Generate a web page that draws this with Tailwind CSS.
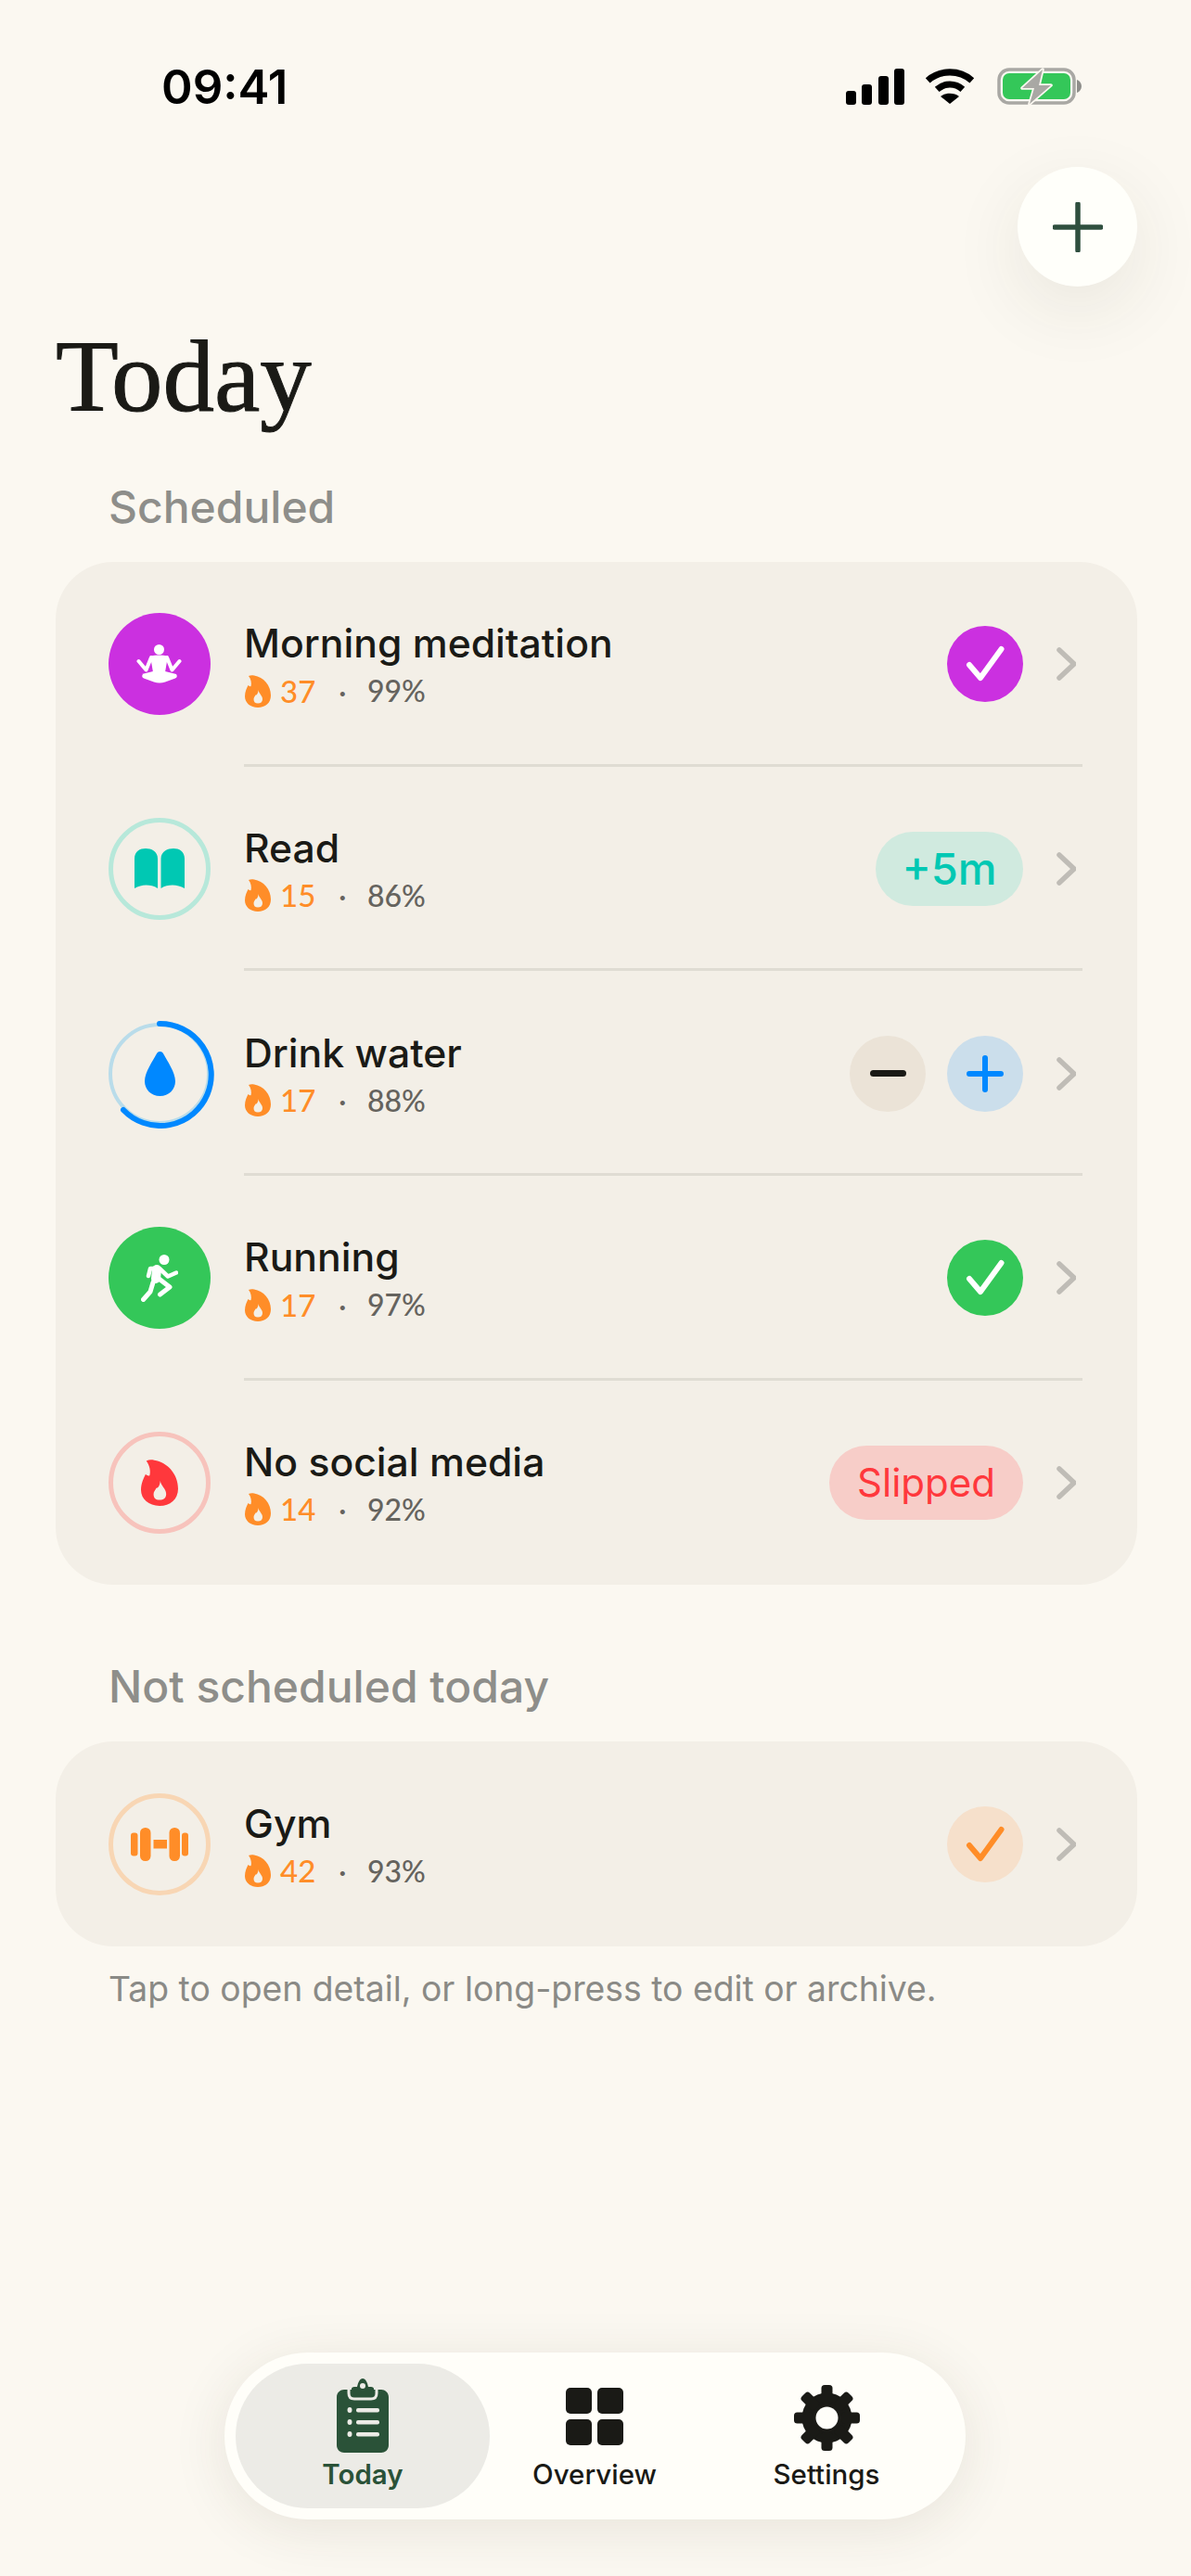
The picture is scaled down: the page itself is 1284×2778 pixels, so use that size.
<!DOCTYPE html>
<html lang="en">
<head>
<meta charset="UTF-8">
<meta name="viewport" content="width=device-width, initial-scale=1.0">
<title>Today</title>
<script src="https://cdn.jsdelivr.net/npm/@tailwindcss/browser@4"></script>
</head>
<body class="bg-[#fbf8f1]">
<div class="relative w-[1284px] h-[2778px] overflow-hidden font-['Inter',sans-serif] text-[#1a1a16]">

  <!-- status bar -->
  <div class="flex items-center justify-between h-[40px] mt-[73px] pl-[174px] pr-[118px]">
    <span class="text-[51px] font-semibold text-black leading-none">09:41</span>
    <div class="flex items-center">
      <svg width="64" height="40" viewBox="0 0 64 40" fill="#000"><rect x="1" y="25" width="11" height="15" rx="3"/><rect x="18" y="18" width="11" height="22" rx="3"/><rect x="36" y="9" width="11" height="31" rx="3"/><rect x="53" y="1" width="11" height="39" rx="3"/></svg>
      <svg class="ml-[20px]" width="58" height="40" viewBox="0 0 58 42" fill="none"><path d="M4 14.5C18 2 40 2 54 14.5" stroke="#000" stroke-width="7.5"/><path d="M14.5 24.5C23 17 35 17 43.5 24.5" stroke="#000" stroke-width="7.5"/><path d="M29 41 18.5 32.5C24 28 34 28 39.5 32.5Z" fill="#000"/></svg>
      <svg class="ml-[22px]" width="91" height="40" viewBox="0 0 91 40" fill="none"><rect x="2" y="2" width="81" height="36" rx="11" stroke="#a9a8a4" stroke-width="3.5"/><rect x="6" y="6" width="73" height="28" rx="7" fill="#34c759"/><path d="M86 13c3 1 5 4 5 7s-2 6-5 7z" fill="#8e8e8a"/><path d="M49 2 27 22h13l-5 17 23-20H45z" fill="#a9a8a4" stroke="#fbf8f1" stroke-width="3.5" paint-order="stroke" stroke-linejoin="round"/></svg>
    </div>
  </div>

  <!-- add button -->
  <button class="absolute left-[1097px] top-[180px] w-[129px] h-[129px] rounded-full bg-[#fffffa] shadow-[0_24px_80px_rgba(60,50,30,0.09)] flex items-center justify-center">
    <svg width="54" height="54" viewBox="0 0 54 54" stroke="#2f4f3e" stroke-width="5.5" stroke-linecap="round"><path d="M27 2v50M2 27h50"/></svg>
  </button>

  <h1 class="mt-[228px] pl-[60px] text-[111px] leading-[130px] font-['Liberation_Serif',serif] text-[#1a1a16] [-webkit-text-stroke:1px_#1a1a16]">Today</h1>
  <h2 class="mt-[46px] pl-[117px] text-[48px] leading-[60px] font-[550] text-[#8e8e8a]">Scheduled</h2>

  <!-- scheduled card -->
  <section class="mt-[29px] mx-[60px] w-[1166px] rounded-[62px] bg-[#f3efe7]">

    <div class="flex items-center h-[220.67px] pl-[57px] pr-[59px]">
      <div class="w-[110px] h-[110px] shrink-0 rounded-full bg-[#cb30e0] flex items-center justify-center">
        <svg width="50" height="42" viewBox="0 0 50 42" fill="#fff"><circle cx="24.5" cy="5.5" r="5.5"/><path fill="none" stroke="#fff" stroke-width="4" stroke-linecap="round" stroke-linejoin="round" d="M2.500 18l8 9.500L16 14M46.500 18l-8 9.500L33 14"/><path d="M15 12.500q9.500-2 19 0L31 30H18z"/><path d="M6 32l12-3h13l12 3q2 3-1 4.500l-11 4q-6 2-12 0l-11-4q-3-1.500-1-4.500z"/></svg>
      </div>
      <div class="flex-1 h-full ml-[36px] pt-[3px] pr-[7px] flex items-center border-b-[3px] border-[#dfdcd3]">
        <div class="flex-1">
          <div class="text-[42.7px] leading-[52px] font-[450]">Morning meditation</div>
          <div class="flex items-center h-[38px] mt-[6px] font-['Lato',sans-serif] text-[33px]">
            <svg class="ml-[1px]" width="28" height="35" viewBox="0 0 28 35"><path fill="#ff8d28" fill-rule="evenodd" d="M4 1C6 0 8 0 10 .5 20 2 28 11 28 22c0 8-6 13-14 13S0 30 0 23c0-5 2-9 3.5-12 1 1 2 1.5 3 1 1-3 0-8-2.500-11zM14.500 16c.5 4 4.500 6 4.500 10 0 3-2 4.500-5 4.500S9.500 29 9.500 26c0-2 1.500-3 2-4.500 1.500.5 3-2.500 3-5.500z"/></svg>
            <span class="ml-[10px] w-[38px] text-[#ff8d28] font-medium">37</span>
            <span class="ml-[25px] w-[14px] text-[#65635e]">·</span>
            <span class="ml-[17px] text-[32px] text-[#65635e] font-medium">99%</span>
          </div>
        </div>
        <div class="w-[82px] h-[82px] rounded-full bg-[#cb30e0] flex items-center justify-center">
          <svg width="44" height="44" viewBox="0 0 44 44" fill="none" stroke="#fff" stroke-width="6" stroke-linecap="round" stroke-linejoin="round"><path d="M5 23l12 14L39.500 6"/></svg>
        </div>
        <svg class="ml-[35px]" width="22" height="36" viewBox="0 0 22 36" fill="none" stroke="#bfbcb6" stroke-width="5.5" stroke-linecap="round" stroke-linejoin="round"><path d="M4 3l16 15L4 33"/></svg>
      </div>
    </div>

    <div class="flex items-center h-[220.67px] pl-[57px] pr-[59px]">
      <div class="w-[110px] h-[110px] shrink-0 rounded-full border-[5px] border-[#b7e8da] flex items-center justify-center">
        <svg width="54" height="43" viewBox="0 0 54 43" fill="#00c8b3"><path d="M0 11C0 3 6 0 12 0s13 3 13 11v32c-4-3-8-3.500-12.500-3.500S4 41 0 43zM54 11c0-8-6-11-12-11S28.500 3 28.500 11v32c4-3 8-3.500 12.500-3.500S50 41 54 43z"/></svg>
      </div>
      <div class="flex-1 h-full ml-[36px] pt-[3px] pr-[7px] flex items-center border-b-[3px] border-[#dfdcd3]">
        <div class="flex-1">
          <div class="text-[42.7px] leading-[52px] font-[450]">Read</div>
          <div class="flex items-center h-[38px] mt-[6px] font-['Lato',sans-serif] text-[33px]">
            <svg class="ml-[1px]" width="28" height="35" viewBox="0 0 28 35"><path fill="#ff8d28" fill-rule="evenodd" d="M4 1C6 0 8 0 10 .5 20 2 28 11 28 22c0 8-6 13-14 13S0 30 0 23c0-5 2-9 3.5-12 1 1 2 1.5 3 1 1-3 0-8-2.500-11zM14.500 16c.5 4 4.500 6 4.500 10 0 3-2 4.500-5 4.500S9.500 29 9.500 26c0-2 1.500-3 2-4.500 1.500.5 3-2.500 3-5.500z"/></svg>
            <span class="ml-[10px] w-[38px] text-[#ff8d28] font-medium">15</span>
            <span class="ml-[25px] w-[14px] text-[#65635e]">·</span>
            <span class="ml-[17px] text-[32px] text-[#65635e] font-medium">86%</span>
          </div>
        </div>
        <div class="w-[159px] h-[80px] rounded-full bg-[#d0eadf] flex items-center justify-center text-[47px] font-medium text-[#00c8b3]">+5m</div>
        <svg class="ml-[35px]" width="22" height="36" viewBox="0 0 22 36" fill="none" stroke="#bfbcb6" stroke-width="5.5" stroke-linecap="round" stroke-linejoin="round"><path d="M4 3l16 15L4 33"/></svg>
      </div>
    </div>

    <div class="flex items-center h-[220.67px] pl-[57px] pr-[59px]">
      <div class="relative w-[110px] h-[110px] shrink-0 flex items-center justify-center">
        <svg class="absolute -left-[1px] -top-[4px]" width="116" height="118" viewBox="0 0 116 118" fill="none"><circle cx="56" cy="59" r="53" stroke="#b9dcea" stroke-width="4"/><path d="M56 5a55 55 0 1 1-39 93" stroke="#0088ff" stroke-width="6" stroke-linecap="round"/></svg>
        <svg class="relative" width="33" height="48" viewBox="0 0 33 48" fill="#0088ff"><path d="M16.500 0c2 0 3 1 4 3C24 10 33 22 33 32c0 9-7 16-16.500 16S0 41 0 32C0 22 9 10 12.500 3c1-2 2-3 4-3z"/></svg>
      </div>
      <div class="flex-1 h-full ml-[36px] pt-[3px] pr-[7px] flex items-center border-b-[3px] border-[#dfdcd3]">
        <div class="flex-1">
          <div class="text-[42.7px] leading-[52px] font-[450]">Drink water</div>
          <div class="flex items-center h-[38px] mt-[6px] font-['Lato',sans-serif] text-[33px]">
            <svg class="ml-[1px]" width="28" height="35" viewBox="0 0 28 35"><path fill="#ff8d28" fill-rule="evenodd" d="M4 1C6 0 8 0 10 .5 20 2 28 11 28 22c0 8-6 13-14 13S0 30 0 23c0-5 2-9 3.5-12 1 1 2 1.5 3 1 1-3 0-8-2.500-11zM14.500 16c.5 4 4.500 6 4.500 10 0 3-2 4.500-5 4.500S9.500 29 9.500 26c0-2 1.500-3 2-4.500 1.500.5 3-2.500 3-5.500z"/></svg>
            <span class="ml-[10px] w-[38px] text-[#ff8d28] font-medium">17</span>
            <span class="ml-[25px] w-[14px] text-[#65635e]">·</span>
            <span class="ml-[17px] text-[32px] text-[#65635e] font-medium">88%</span>
          </div>
        </div>
        <div class="w-[82px] h-[82px] rounded-full bg-[#ebe3d7] flex items-center justify-center">
          <svg width="39" height="7" viewBox="0 0 39 7"><rect width="39" height="7" rx="3.5" fill="#1a1a16"/></svg>
        </div>
        <div class="ml-[23px] w-[82px] h-[82px] rounded-full bg-[#cbdeeb] flex items-center justify-center">
          <svg width="40" height="40" viewBox="0 0 40 40" stroke="#0088ff" stroke-width="6" stroke-linecap="round"><path d="M20 3v34M3 20h34"/></svg>
        </div>
        <svg class="ml-[35px]" width="22" height="36" viewBox="0 0 22 36" fill="none" stroke="#bfbcb6" stroke-width="5.5" stroke-linecap="round" stroke-linejoin="round"><path d="M4 3l16 15L4 33"/></svg>
      </div>
    </div>

    <div class="flex items-center h-[220.67px] pl-[57px] pr-[59px]">
      <div class="w-[110px] h-[110px] shrink-0 rounded-full bg-[#34c759] flex items-center justify-center">
        <svg width="40" height="51" viewBox="0 0 40 51" fill="none" stroke="#fff" stroke-linecap="round" stroke-linejoin="round"><circle cx="25" cy="5.5" r="5.5" fill="#fff" stroke="none"/><path stroke-width="4.5" d="M8 23l2-8h10l9 8.500 9-4"/><path stroke-width="10" d="M17 16l-1 10"/><path stroke-width="5" d="M18 25l13 10-10.500 8M13 30l-3 10-7.500 8.500"/></svg>
      </div>
      <div class="flex-1 h-full ml-[36px] pt-[3px] pr-[7px] flex items-center border-b-[3px] border-[#dfdcd3]">
        <div class="flex-1">
          <div class="text-[42.7px] leading-[52px] font-[450]">Running</div>
          <div class="flex items-center h-[38px] mt-[6px] font-['Lato',sans-serif] text-[33px]">
            <svg class="ml-[1px]" width="28" height="35" viewBox="0 0 28 35"><path fill="#ff8d28" fill-rule="evenodd" d="M4 1C6 0 8 0 10 .5 20 2 28 11 28 22c0 8-6 13-14 13S0 30 0 23c0-5 2-9 3.5-12 1 1 2 1.5 3 1 1-3 0-8-2.500-11zM14.500 16c.5 4 4.500 6 4.500 10 0 3-2 4.500-5 4.500S9.500 29 9.500 26c0-2 1.500-3 2-4.500 1.500.5 3-2.500 3-5.500z"/></svg>
            <span class="ml-[10px] w-[38px] text-[#ff8d28] font-medium">17</span>
            <span class="ml-[25px] w-[14px] text-[#65635e]">·</span>
            <span class="ml-[17px] text-[32px] text-[#65635e] font-medium">97%</span>
          </div>
        </div>
        <div class="w-[82px] h-[82px] rounded-full bg-[#34c759] flex items-center justify-center">
          <svg width="44" height="44" viewBox="0 0 44 44" fill="none" stroke="#fff" stroke-width="6" stroke-linecap="round" stroke-linejoin="round"><path d="M5 23l12 14L39.500 6"/></svg>
        </div>
        <svg class="ml-[35px]" width="22" height="36" viewBox="0 0 22 36" fill="none" stroke="#bfbcb6" stroke-width="5.5" stroke-linecap="round" stroke-linejoin="round"><path d="M4 3l16 15L4 33"/></svg>
      </div>
    </div>

    <div class="flex items-center h-[220.67px] pl-[57px] pr-[59px]">
      <div class="w-[110px] h-[110px] shrink-0 rounded-full border-[5px] border-[#f7c3bc] flex items-center justify-center">
        <svg width="40" height="50" viewBox="0 0 28 35"><path fill="#ff383c" fill-rule="evenodd" d="M4 1C6 0 8 0 10 .5 20 2 28 11 28 22c0 8-6 13-14 13S0 30 0 23c0-5 2-9 3.5-12 1 1 2 1.5 3 1 1-3 0-8-2.500-11zM14.500 16c.5 4 4.500 6 4.500 10 0 3-2 4.500-5 4.500S9.500 29 9.500 26c0-2 1.500-3 2-4.500 1.500.5 3-2.500 3-5.500z"/></svg>
      </div>
      <div class="flex-1 h-full ml-[36px] pr-[7px] flex items-center">
        <div class="flex-1">
          <div class="text-[42.7px] leading-[52px] font-[450]">No social media</div>
          <div class="flex items-center h-[38px] mt-[6px] font-['Lato',sans-serif] text-[33px]">
            <svg class="ml-[1px]" width="28" height="35" viewBox="0 0 28 35"><path fill="#ff8d28" fill-rule="evenodd" d="M4 1C6 0 8 0 10 .5 20 2 28 11 28 22c0 8-6 13-14 13S0 30 0 23c0-5 2-9 3.5-12 1 1 2 1.5 3 1 1-3 0-8-2.500-11zM14.500 16c.5 4 4.500 6 4.500 10 0 3-2 4.500-5 4.500S9.500 29 9.500 26c0-2 1.500-3 2-4.500 1.500.5 3-2.500 3-5.500z"/></svg>
            <span class="ml-[10px] w-[38px] text-[#ff8d28] font-medium">14</span>
            <span class="ml-[25px] w-[14px] text-[#65635e]">·</span>
            <span class="ml-[17px] text-[32px] text-[#65635e] font-medium">92%</span>
          </div>
        </div>
        <div class="w-[209px] h-[80px] rounded-full bg-[#f7cdc8] flex items-center justify-center text-[42px] text-[#ff383c]">Slipped</div>
        <svg class="ml-[35px]" width="22" height="36" viewBox="0 0 22 36" fill="none" stroke="#bfbcb6" stroke-width="5.5" stroke-linecap="round" stroke-linejoin="round"><path d="M4 3l16 15L4 33"/></svg>
      </div>
    </div>
  </section>

  <h2 class="mt-[80px] pl-[117px] text-[48px] leading-[60px] font-[550] text-[#8e8e8a]">Not scheduled today</h2>

  <!-- not scheduled card -->
  <section class="mt-[29px] mx-[60px] w-[1166px] rounded-[62px] bg-[#f3efe7]">
    <div class="flex items-center h-[220.67px] pl-[57px] pr-[59px]">
      <div class="w-[110px] h-[110px] shrink-0 rounded-full border-[5px] border-[#f8d6b4] flex items-center justify-center">
        <svg width="62" height="36" viewBox="0 0 62 36" fill="#ff8d28"><rect y="5.5" width="7.5" height="25" rx="3"/><rect x="10" width="11.5" height="36" rx="5.5"/><rect x="24.5" y="13" width="14.5" height="9.5"/><rect x="41.5" width="11.5" height="36" rx="5.5"/><rect x="55" y="5.5" width="7" height="25" rx="3"/></svg>
      </div>
      <div class="flex-1 h-full ml-[36px] pr-[7px] flex items-center">
        <div class="flex-1">
          <div class="text-[42.7px] leading-[52px] font-[450]">Gym</div>
          <div class="flex items-center h-[38px] mt-[6px] font-['Lato',sans-serif] text-[33px]">
            <svg class="ml-[1px]" width="28" height="35" viewBox="0 0 28 35"><path fill="#ff8d28" fill-rule="evenodd" d="M4 1C6 0 8 0 10 .5 20 2 28 11 28 22c0 8-6 13-14 13S0 30 0 23c0-5 2-9 3.5-12 1 1 2 1.5 3 1 1-3 0-8-2.500-11zM14.500 16c.5 4 4.500 6 4.500 10 0 3-2 4.500-5 4.500S9.500 29 9.500 26c0-2 1.500-3 2-4.500 1.500.5 3-2.500 3-5.500z"/></svg>
            <span class="ml-[10px] w-[38px] text-[#ff8d28] font-medium">42</span>
            <span class="ml-[25px] w-[14px] text-[#65635e]">·</span>
            <span class="ml-[17px] text-[32px] text-[#65635e] font-medium">93%</span>
          </div>
        </div>
        <div class="w-[82px] h-[82px] rounded-full bg-[#f6e0cb] flex items-center justify-center">
          <svg width="44" height="44" viewBox="0 0 44 44" fill="none" stroke="#ff8d28" stroke-width="6" stroke-linecap="round" stroke-linejoin="round"><path d="M5 23l12 14L39.500 6"/></svg>
        </div>
        <svg class="ml-[35px]" width="22" height="36" viewBox="0 0 22 36" fill="none" stroke="#bfbcb6" stroke-width="5.5" stroke-linecap="round" stroke-linejoin="round"><path d="M4 3l16 15L4 33"/></svg>
      </div>
    </div>
  </section>

  <p class="mt-[21px] pl-[117px] text-[37.3px] leading-[50px] text-[#8a8a86]">Tap to open detail, or long-press to edit or archive.</p>

  <!-- tab bar -->
  <nav class="absolute left-[242px] top-[2537px] w-[799px] h-[180px] rounded-[90px] bg-[#fffef9] shadow-[0_10px_60px_rgba(60,50,30,0.10)] flex items-center pl-[12px]">
    <div class="w-[274px] h-[156px] rounded-[78px] bg-[#ecebe6] flex flex-col items-center pt-[16px] text-[#2a5238]">
      <svg width="56" height="80" viewBox="0 0 56 80" fill="#2a5238"><path fill-rule="evenodd" d="M8 12h8v-1c0-1 1-2 3-2h3c1-5 3-9 6-9s5 4 6 9h3c2 0 3 1 3 2v1h8c4 0 8 3 8 8v52c0 5-4 8-8 8H8c-4 0-8-3-8-8V20c0-5 4-8 8-8zm20-7c-2 0-3 1-3 3s1 3 3 3 3-1 3-3-1-3-3-3z"/><path fill="none" stroke="#ecebe6" stroke-width="3" d="M13 12v4c0 4 2 6 6 6h18c4 0 6-2 6-6v-4"/><g fill="#ecebe6"><ellipse cx="14" cy="34" rx="2.5" ry="3"/><rect x="21" y="32" width="25" height="4.5" rx="2"/><ellipse cx="14" cy="47" rx="2.5" ry="3"/><rect x="21" y="45" width="25" height="4.5" rx="2"/><ellipse cx="14" cy="60" rx="2.5" ry="3"/><rect x="21" y="58" width="25" height="4.5" rx="2"/></g></svg>
      <span class="mt-[4px] text-[29.5px] leading-[38px] font-semibold">Today</span>
    </div>
    <div class="w-[226px] h-[156px] flex flex-col items-center pt-[26px] text-[#1a1a16]">
      <svg width="62" height="62" viewBox="0 0 62 62" fill="#1a1a16"><rect width="28" height="28" rx="5"/><rect x="34" width="28" height="28" rx="5"/><rect y="34" width="28" height="28" rx="5"/><rect x="34" y="34" width="28" height="28" rx="5"/></svg>
      <span class="mt-[12px] text-[29.5px] leading-[38px] font-medium">Overview</span>
    </div>
    <div class="w-[274px] h-[156px] flex flex-col items-center pt-[23px] text-[#1a1a16]">
      <svg width="71" height="71" viewBox="0 0 71 71" fill="#1a1a16"><circle cx="35.5" cy="35.5" r="27"/><rect x="29.5" width="12" height="20" rx="3.5"/><rect x="29.5" width="12" height="20" rx="3.5" transform="rotate(45 35.5 35.5)"/><rect x="29.5" width="12" height="20" rx="3.5" transform="rotate(90 35.5 35.5)"/><rect x="29.5" width="12" height="20" rx="3.5" transform="rotate(135 35.5 35.5)"/><rect x="29.5" width="12" height="20" rx="3.5" transform="rotate(180 35.5 35.5)"/><rect x="29.5" width="12" height="20" rx="3.5" transform="rotate(225 35.5 35.5)"/><rect x="29.5" width="12" height="20" rx="3.5" transform="rotate(270 35.5 35.5)"/><rect x="29.5" width="12" height="20" rx="3.5" transform="rotate(315 35.5 35.5)"/><circle cx="35.5" cy="35.5" r="12" fill="#fffef9"/></svg>
      <span class="mt-[6px] text-[29.5px] leading-[38px] font-medium">Settings</span>
    </div>
  </nav>
</div>
</body>
</html>
